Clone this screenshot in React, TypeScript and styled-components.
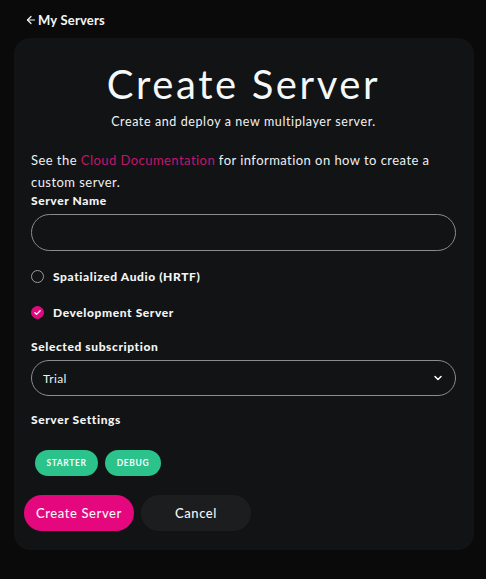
import React from "react";
import styled, { createGlobalStyle } from "styled-components";

const Global = createGlobalStyle`
  html, body { margin: 0; padding: 0; background: #0a0a0a; }
  body { font-family: "Lato", "Noto Sans", sans-serif; color: #f2f4f5; }
  * { box-sizing: border-box; }
`;

const Page = styled.div`
  width: 486px;
  height: 579px;
  padding: 11px 12px 0 14px;
  display: flex;
  flex-direction: column;
  background: #0a0a0a;
`;

const BackLink = styled.a`
  display: flex;
  align-items: center;
  gap: 1px;
  margin-left: 11px;
  height: 18px;
  font-size: 13px;
  font-weight: 700;
  letter-spacing: 0.2px;
  color: #f4f6f7;
  text-decoration: none;
`;

const Card = styled.div`
  margin-top: 9px;
  width: 460px;
  height: 512px;
  background: #111315;
  border-radius: 16px;
  padding: 20px 18px 0 17px;
  display: flex;
  flex-direction: column;
`;

const Title = styled.h1`
  margin: 0;
  text-align: center;
  font-size: 40px;
  font-weight: 400;
  line-height: 52px;
  letter-spacing: 2.6px;
  color: #f4f8f8;
`;

const Subtitle = styled.p`
  margin: 4px 0 0;
  text-align: center;
  font-size: 12.5px;
  line-height: 16px;
  letter-spacing: 0.6px;
  color: #f0f2f3;
`;

const Intro = styled.p`
  margin: 19px 0 0;
  font-size: 13px;
  line-height: 22px;
  letter-spacing: 0.45px;
  color: #eef0f1;
`;

const Link = styled.a`
  color: #c4156f;
  text-decoration: none;
`;

const Label = styled.div`
  font-size: 12px;
  font-weight: 900;
  line-height: 16px;
  letter-spacing: 0.6px;
  color: #f4f5f6;
`;

const Field = styled.div<{ $mt: number }>`
  margin-top: ${(p) => p.$mt}px;
  display: flex;
  flex-direction: column;
  gap: 5px;
`;

const Input = styled.input`
  width: 425px;
  height: 37px;
  border-radius: 19px;
  border: 1px solid #8a8c8e;
  background: transparent;
  outline: none;
  padding: 0 12px;
  color: #fff;
  font-family: inherit;
`;

const Option = styled.label<{ $mt: number }>`
  margin-top: ${(p) => p.$mt}px;
  display: flex;
  align-items: center;
  gap: 9px;
  font-size: 12px;
  font-weight: 900;
  letter-spacing: 0.6px;
  color: #f4f5f6;
  height: 18px;
`;

const Circle = styled.span<{ $on?: boolean }>`
  width: 13px;
  height: 13px;
  border-radius: 50%;
  border: 1px solid ${(p) => (p.$on ? "#e3087e" : "#9a9c9e")};
  background: ${(p) => (p.$on ? "#e3087e" : "transparent")};
  display: flex;
  align-items: center;
  justify-content: center;
`;

const Select = styled.div`
  width: 425px;
  height: 36px;
  border-radius: 18px;
  border: 1px solid #8a8c8e;
  display: flex;
  align-items: center;
  justify-content: space-between;
  padding: 0 11px 0 11px;
  font-size: 12px;
  letter-spacing: 0.4px;
  color: #eef0f1;
`;

const Tags = styled.div`
  margin-top: 22px;
  margin-left: 4px;
  display: flex;
  gap: 7px;
`;

const Tag = styled.span<{ $w: number }>`
  width: ${(p) => p.$w}px;
  height: 26px;
  border-radius: 13px;
  background: #2bc38b;
  color: #f3fffa;
  font-size: 8.5px;
  font-weight: 700;
  display: flex;
  align-items: center;
  justify-content: center;
  letter-spacing: 0.6px;
`;

const Actions = styled.div`
  margin-top: 19px;
  margin-left: -7px;
  display: flex;
  gap: 7px;
`;

const Button = styled.button<{ $primary?: boolean }>`
  width: 110px;
  height: 36px;
  border-radius: 18px;
  border: none;
  font-family: inherit;
  font-size: 13px;
  font-weight: 500;
  letter-spacing: 0.6px;
  color: #f5f5f5;
  background: ${(p) => (p.$primary ? "#e4077e" : "#1c1d1e")};
`;

export default function App() {
  return (
    <>
      <Global />
      <Page>
        <BackLink href="#">
          <svg width="12" height="12" viewBox="0 0 24 24" fill="none" stroke="#f4f6f7" strokeWidth="2.4" strokeLinecap="round" strokeLinejoin="round">
            <path d="M19 12H5" />
            <path d="M12 19l-7-7 7-7" />
          </svg>
          My Servers
        </BackLink>
        <Card>
          <Title>Create Server</Title>
          <Subtitle>Create and deploy a new multiplayer server.</Subtitle>
          <Intro>
            See the <Link href="#">Cloud Documentation</Link> for information on how to create a custom server.
          </Intro>
          <Field $mt={0}>
            <Label>Server Name</Label>
            <Input />
          </Field>
          <Option $mt={16}>
            <Circle />
            Spatialized Audio (HRTF)
          </Option>
          <Option $mt={18}>
            <Circle $on>
              <svg width="9" height="9" viewBox="0 0 24 24" fill="none" stroke="#fff" strokeWidth="3.5" strokeLinecap="round" strokeLinejoin="round">
                <path d="M5 12.5l4.5 4.5L19 7.5" />
              </svg>
            </Circle>
            Development Server
          </Option>
          <Field $mt={18}>
            <Label>Selected subscription</Label>
            <Select>
              Trial
              <svg width="12" height="12" viewBox="0 0 24 24" fill="none" stroke="#fff" strokeWidth="3" strokeLinecap="round" strokeLinejoin="round">
                <path d="M6 9l6 6 6-6" />
              </svg>
            </Select>
          </Field>
          <Field $mt={16}>
            <Label>Server Settings</Label>
          </Field>
          <Tags>
            <Tag $w={63}>STARTER</Tag>
            <Tag $w={56}>DEBUG</Tag>
          </Tags>
          <Actions>
            <Button $primary>Create Server</Button>
            <Button>Cancel</Button>
          </Actions>
        </Card>
      </Page>
    </>
  );
}
